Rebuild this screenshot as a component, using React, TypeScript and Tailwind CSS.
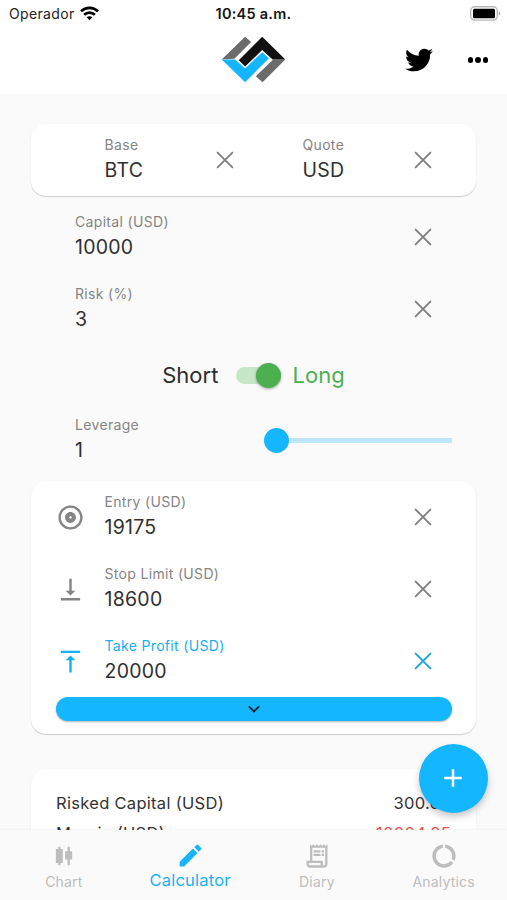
import type { ReactNode } from "react";
import {
  MdAdd,
  MdCandlestickChart,
  MdDataUsage,
  MdEdit,
  MdOutlineAlbum,
  MdOutlineReceiptLong,
  MdVerticalAlignBottom,
  MdVerticalAlignTop,
} from "react-icons/md";
import { FaTwitter } from "react-icons/fa";

function Logo() {
  return (
    <svg className="mb-[2px] h-[47px] w-[65px]" viewBox="20 18 194 140">
      <path d="M22 88L92 20L110 36L60 86Z" fill="#6b6b6b" />
      <path d="M212 88L144 156L124 138L175 89Z" fill="#6b6b6b" />
      <path d="M22 88H62L92 115L143 66L163 84L92 156Z" fill="#14b6ff" />
      <path d="M143 20L212 88H174L143 60L92 109L73 90Z" fill="#111" />
    </svg>
  );
}

function Wifi() {
  return (
    <svg className="mb-[1px] h-[15px] w-[19px]" viewBox="0 0 19 15" fill="none" stroke="#000" strokeWidth="2.7">
      <path d="M1 5.3C5.8 .7 13.2 .7 18 5.3" />
      <path d="M4.1 8.7C7.2 5.8 11.8 5.8 14.9 8.7" />
      <path d="M6.7 11.3L9.5 14.3L12.3 11.3C10.8 9.9 8.2 9.9 6.7 11.3Z" fill="#000" stroke="none" />
    </svg>
  );
}

function Battery() {
  return (
    <svg className="mb-[1px] h-[15px] w-[31px]" viewBox="0 0 31 15">
      <rect x=".7" y=".7" width="26.6" height="13.4" rx="4" fill="#fff" stroke="#b8b8b8" strokeWidth="1.4" />
      <rect x="3" y="2.8" width="22" height="9.4" rx="1.5" fill="#000" />
      <path d="M28.8 5C30.6 5.8 30.6 9 28.8 9.8Z" fill="#a6a6a6" />
    </svg>
  );
}

function Clear({ className = "text-[#808080]" }: { className?: string }) {
  return (
    <svg
      className={`size-[18px] shrink-0 ${className}`}
      viewBox="0 0 18 18"
      stroke="currentColor"
      strokeWidth="1.9"
      strokeLinecap="round"
    >
      <path d="M1.6 1.6L16.4 16.4M16.4 1.6L1.6 16.4" />
    </svg>
  );
}

type FieldProps = { label: string; value: string; active?: boolean };

function Field({ label, value, active }: FieldProps) {
  return (
    <div className="flex flex-1 flex-col">
      <span className={`text-[14px] leading-[18px] tracking-[0.33px] ${active ? "text-[#18aff2]" : "text-[#858585]"}`}>
        {label}
      </span>
      <span className="mt-[2px] text-[19.5px] leading-[28px] tracking-[0.25px] text-[#303030]">{value}</span>
    </div>
  );
}

function PriceRow({ icon, active, ...field }: FieldProps & { icon: ReactNode }) {
  return (
    <div className="flex h-[72px] items-center pr-[44px] pl-[25px]">
      <span className={`w-[48.5px] text-[29px] ${active ? "text-[#18aff2]" : "text-[#858585]"}`}>{icon}</span>
      <Field {...field} active={active} />
      <Clear className={active ? "text-[#18a5e5]" : "text-[#808080]"} />
    </div>
  );
}

const card = "mx-[31px] rounded-[15px] bg-white shadow-[0_1px_1px_rgba(0,0,0,0.18),0_0_2px_rgba(0,0,0,0.02)]";

export default function App() {
  return (
    <div className="relative flex h-[900px] w-[507px] flex-col overflow-hidden bg-[#fafafa] font-['Inter','Liberation_Sans',sans-serif]">
      <header className="h-[94px] shrink-0 bg-white">
        <div className="grid h-[27px] grid-cols-3 items-center pr-[6px] pl-[9px]">
          <div className="flex items-center gap-[5px] text-[14px] tracking-[0.35px] text-[#222]">
            Operador <Wifi />
          </div>
          <div className="pr-[3px] text-center text-[14.5px] font-semibold tracking-[0.25px] text-[#151515]">10:45 a.m.</div>
          <div className="flex justify-end">
            <Battery />
          </div>
        </div>
        <div className="grid h-[66px] grid-cols-3 items-center">
          <div />
          <div className="flex justify-center">
            <Logo />
          </div>
          <div className="flex items-center justify-end gap-[35px] pr-[19px]">
            <FaTwitter size={28} />
            <div className="flex gap-[2px]">
              <i className="size-[5.5px] rounded-full bg-black" />
              <i className="size-[5.5px] rounded-full bg-black" />
              <i className="size-[5.5px] rounded-full bg-black" />
            </div>
          </div>
        </div>
      </header>

      <main className="h-[736px] shrink-0 overflow-hidden pt-[30px]">
        <section className={`${card} flex h-[72px] items-center pr-[44px] pl-[73.5px]`}>
          <div className="flex w-[129px] items-center">
            <Field label="Base" value="BTC" />
            <Clear />
          </div>
          <div className="ml-[69px] flex flex-1 items-center">
            <Field label="Quote" value="USD" />
            <Clear />
          </div>
        </section>

        <section className="pt-[5px] pr-[75px] pl-[75px]">
          <div className="flex h-[72px] items-center">
            <Field label="Capital (USD)" value="10000" />
            <Clear />
          </div>
          <div className="flex h-[72px] items-center">
            <Field label="Risk (%)" value="3" />
            <Clear />
          </div>
        </section>

        <div className="flex h-[59px] items-center justify-center pt-[1px] text-[22px] tracking-[0.05px]">
          <span className="text-[#2c2c2c]">Short</span>
          <div className="mr-[12px] ml-[17px] flex h-[17px] w-[45px] items-center justify-end rounded-full bg-[#c8e6c9]">
            <i className="size-[25px] shrink-0 rounded-full bg-[#4caf50] shadow-[0_1px_3px_rgba(0,0,0,0.35)]" />
          </div>
          <span className="text-[#4caf50]">Long</span>
        </div>

        <div className="flex h-[72px] items-center pr-[55px] pl-[75px]">
          <Field label="Leverage" value="1" />
          <div className="flex w-[188px] items-center">
            <i className="size-[25px] rounded-full bg-[#14b6ff]" />
            <i className="h-[5px] flex-1 bg-[#bfe5fb]" />
          </div>
        </div>

        <section className={`${card} mt-[5px] h-[253px]`}>
          <PriceRow icon={<MdOutlineAlbum />} label="Entry (USD)" value="19175" />
          <PriceRow icon={<MdVerticalAlignBottom />} label="Stop Limit (USD)" value="18600" />
          <PriceRow icon={<MdVerticalAlignTop />} label="Take Profit (USD)" value="20000" active />
          <button className="mx-[25px] flex h-[24px] w-[396px] items-center justify-center rounded-full bg-[#14b6ff] shadow-[0_1px_2px_rgba(0,0,0,0.3)]">
            <svg className="h-[8px] w-[12px]" viewBox="0 0 13 8" fill="none" stroke="#0b2633" strokeWidth="2.1">
              <path d="M1 1.2L6.5 6.6L12 1.2" />
            </svg>
          </button>
        </section>

        <section className={`${card} mt-[35px] h-[160px] px-[25px] pt-[19px] text-[16.5px] leading-[30px] tracking-[0.3px] text-[#333]`}>
          <div className="flex justify-between">
            <span>Risked Capital (USD)</span>
            <span>300.00</span>
          </div>
          <div className="flex justify-between">
            <span>Margin (USD)</span>
            <span className="text-[#ef5350]">10004.35</span>
          </div>
        </section>
      </main>

      <button className="absolute top-[743.5px] left-[418.5px] z-10 flex size-[69px] items-center justify-center rounded-full bg-[#14b6ff] text-white shadow-[0_4px_7px_rgba(0,0,0,0.22)]">
        <MdAdd size={30} />
      </button>

      <nav className="grid h-[70px] shrink-0 grid-cols-4 bg-[#fafafa] text-[14px] tracking-[0.2px] text-[#bdbdbd] shadow-[0_-1px_2px_rgba(0,0,0,0.05)]">
        <div className="flex flex-col items-center pt-[12px] pl-[1px]">
          <MdCandlestickChart size={28} />
          <span className="leading-[23px]">Chart</span>
        </div>
        <div className="flex flex-col items-center pt-[11px] text-[#18b3fb]">
          <MdEdit size={29} />
          <span className="text-[16.5px] leading-[21px]">Calculator</span>
        </div>
        <div className="flex flex-col items-center pt-[12px]">
          <MdOutlineReceiptLong size={28} />
          <span className="leading-[23px]">Diary</span>
        </div>
        <div className="flex flex-col items-center pt-[12px]">
          <MdDataUsage size={28} />
          <span className="leading-[23px]">Analytics</span>
        </div>
      </nav>
    </div>
  );
}
